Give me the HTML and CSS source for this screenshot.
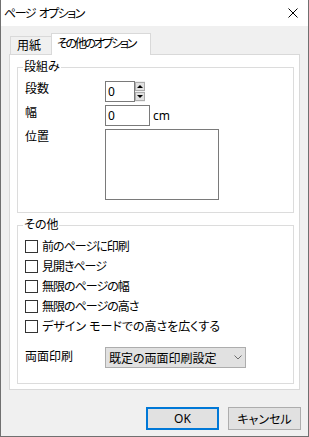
FILE: index.html
```html
<!DOCTYPE html>
<html lang="ja">
<head>
    <meta charset="UTF-8">
    <title>ページ オプション</title>
    <link rel="stylesheet" href="styles.css">
</head>
<body>
    <div class="window">
        <div class="titlebar">
            <span class="title">ページ オプション</span>
            <svg class="close" width="10" height="10" viewBox="0 0 10 10">
                <path d="M0.5 0.5 L9.5 9.5 M9.5 0.5 L0.5 9.5" stroke="#000" stroke-width="1" fill="none"/>
            </svg>
        </div>

        <div class="tabs">
            <div class="tab">用紙</div>
            <div class="tab active">その他のオプション</div>
        </div>

        <div class="panel">
            <fieldset class="group columns">
                <legend>段組み</legend>
                <div class="row">
                    <span class="label">段数</span>
                    <div class="input input-count">0</div>
                    <div class="spin">
                        <span class="spin-btn up"></span>
                        <span class="spin-btn down"></span>
                    </div>
                </div>
                <div class="row">
                    <span class="label">幅</span>
                    <div class="input input-width">0</div>
                    <span class="unit">cm</span>
                </div>
                <div class="row">
                    <span class="label">位置</span>
                    <div class="listbox"></div>
                </div>
            </fieldset>

            <fieldset class="group other">
                <legend>その他</legend>
                <div class="checks">
                    <label class="check"><span class="box"></span>前のページに印刷</label>
                    <label class="check"><span class="box"></span>見開きページ</label>
                    <label class="check"><span class="box"></span>無限のページの幅</label>
                    <label class="check"><span class="box"></span>無限のページの高さ</label>
                    <label class="check check-wide"><span class="box"></span>デザイン モードでの高さを広くする</label>
                </div>
                <div class="row duplex">
                    <span class="label">両面印刷</span>
                    <div class="select">
                        <span>既定の両面印刷設定</span>
                        <svg width="8" height="5" viewBox="0 0 8 5">
                            <path d="M0.5 0.5 L4 4 L7.5 0.5" stroke="#6d6d6d" stroke-width="1" fill="none"/>
                        </svg>
                    </div>
                </div>
            </fieldset>
        </div>

        <div class="buttons">
            <button class="btn btn-default">OK</button>
            <button class="btn">キャンセル</button>
        </div>
    </div>
</body>
</html>
```

FILE: styles.css
```css
body {
    margin: 0;
    font-family: "Noto Sans", "Noto Sans CJK JP", sans-serif;
    font-size: 12px;
    font-feature-settings: "palt";
    color: #000;
    background: #fff;
}
.window {
    width: 309px;
    height: 437px;
    box-sizing: border-box;
    border: 1px solid #707070;
    border-top: none;
    background: #f0f0f0;
    display: flex;
    flex-direction: column;
}
.titlebar {
    height: 26px;
    flex-shrink: 0;
    background: #fff;
    display: flex;
    align-items: center;
    justify-content: space-between;
    padding: 0 10px 0 3px;
}
.title {
    letter-spacing: -1.5px;
    word-spacing: 2px;
}
.close {
    display: block;
}

/* tabs */
.tabs {
    display: flex;
    align-items: flex-end;
    height: 22px;
    margin: 7px 0 -1px 9px;
    position: relative;
    z-index: 1;
}
.tab {
    box-sizing: border-box;
    width: 42px;
    height: 18px;
    margin-bottom: 1px;
    margin-right: -1px;
    padding: 1px 0 0 6px;
    line-height: 16px;
    white-space: nowrap;
    border: 1px solid #d9d9d9;
    border-bottom: none;
    background: #f0f0f0;
}
.tab.active {
    width: 100px;
    height: 22px;
    margin-bottom: 0;
    padding: 2px 0 0 5px;
    letter-spacing: -2.3px;
    background: #fff;
}

/* panel */
.panel {
    height: 336px;
    box-sizing: border-box;
    margin: 0 8px;
    padding: 0 5px 0 7px;
    border: 1px solid #d9d9d9;
    background: #fff;
}
.group {
    margin: 5px 0 0;
    padding: 7px 0 12px 7px;
    border: 1px solid #dcdcdc;
    min-width: 0;
}
.group legend {
    padding: 0 1px;
    margin-left: -2px;
    line-height: 14px;
}
.group.other {
    padding-top: 8px;
    padding-bottom: 15px;
}
.row {
    display: flex;
    align-items: flex-start;
    margin-bottom: 3px;
}
.row:last-child {
    margin-bottom: 0;
}
.label {
    width: 80px;
    flex-shrink: 0;
    line-height: 16px;
}
.input {
    box-sizing: border-box;
    height: 21px;
    border: 1px solid #7a7a7a;
    background: #fff;
    line-height: 19px;
    padding-left: 2px;
}
.input-count {
    width: 30px;
}
.input-width {
    width: 45px;
}
.unit {
    margin-left: 3px;
    line-height: 21px;
}
.spin {
    width: 10px;
    height: 21px;
    background: #f0f0f0;
    display: flex;
    flex-direction: column;
    justify-content: space-between;
    padding: 1px 0;
    box-sizing: border-box;
}
.spin-btn {
    box-sizing: border-box;
    height: 9px;
    border: 1px solid #adadad;
    background: #e1e1e1;
    display: flex;
    align-items: center;
    justify-content: center;
}
.spin-btn::before {
    content: "";
    border-left: 3px solid transparent;
    border-right: 3px solid transparent;
}
.spin-btn.up::before {
    border-bottom: 3px solid #000;
}
.spin-btn.down::before {
    border-top: 3px solid #000;
}
.listbox {
    box-sizing: border-box;
    width: 114px;
    height: 71px;
    border: 1px solid #7a7a7a;
    background: #fff;
}

/* checkboxes */
.checks {
    display: flex;
    flex-direction: column;
    gap: 7px;
}
.check {
    display: flex;
    align-items: center;
    height: 13px;
    line-height: 13px;
    letter-spacing: -1px;
    white-space: pre;
}
.check-wide {
    letter-spacing: 0;
}
.box {
    box-sizing: border-box;
    width: 13px;
    height: 13px;
    margin-right: 4px;
    border: 1px solid #333;
    background: #fff;
}
.duplex {
    margin-top: 14px;
}
.duplex .label {
    line-height: 20px;
}
.select {
    box-sizing: border-box;
    width: 141px;
    height: 21px;
    border: 1px solid #adadad;
    background: #e1e1e1;
    display: flex;
    align-items: center;
    justify-content: space-between;
    padding: 0 3px 0 3px;
}

/* bottom buttons */
.buttons {
    display: flex;
    justify-content: flex-end;
    gap: 9px;
    margin-top: 17px;
    padding-right: 7px;
}
.btn {
    box-sizing: border-box;
    width: 73px;
    height: 23px;
    padding: 0;
    border: 1px solid #adadad;
    background: #e1e1e1;
    font: inherit;
    color: #000;
}
.btn-default {
    border: 2px solid #0078d7;
}
```
